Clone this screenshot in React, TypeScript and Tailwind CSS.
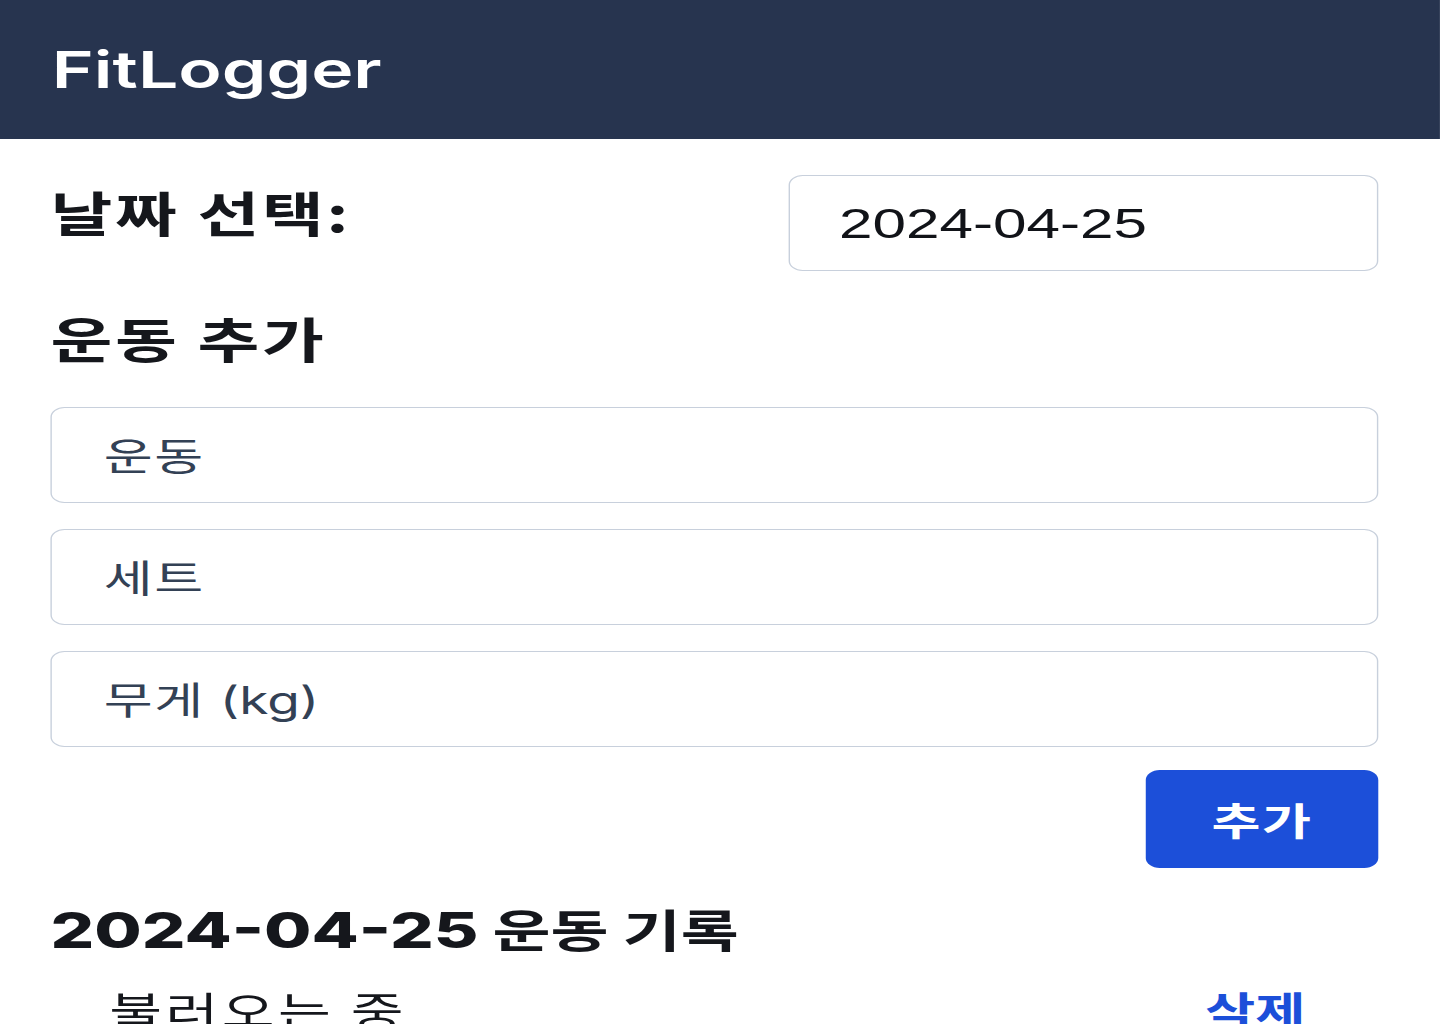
import React from "react";

const KR = "font-['Noto_Sans_CJK_KR','Noto_Sans',sans-serif]";

function Field({ placeholder }: { placeholder: React.ReactNode }) {
  return (
    <div className="flex h-[96px] items-center rounded-[10px] border border-[#c8d0dc] bg-white pl-[37px]">
      <span className="text-[38px] leading-none text-[#334155]">{placeholder}</span>
    </div>
  );
}

export default function App() {
  return (
    <div className="h-[1024px] w-full overflow-hidden bg-white">
      <div className="w-[1028px] origin-top-left scale-x-[1.4007] font-[Inter,'Noto_Sans_CJK_KR',sans-serif]">
        <header className="flex h-[139px] items-center bg-[#27344f] pl-[37px]">
          <h1 className="text-[51px] font-semibold leading-none text-white">FitLogger</h1>
        </header>

        <main className="flex flex-col pl-[36px] pr-[44px] pt-[36px]">
          <div className="flex items-start justify-between">
            <h2 className={`${KR} mt-[12px] text-[48px] font-bold leading-none tracking-[0.04em] text-[#15171c]`}>
              날짜 선택:
            </h2>
            <div className="flex h-[96px] w-[421px] items-center rounded-[10px] border border-[#c8d0dc] pl-[35px]">
              <span className="font-['Liberation_Sans',Arial,sans-serif] text-[43px] leading-none text-[#111318]">
                2024-04-25
              </span>
            </div>
          </div>

          <h2 className={`${KR} mt-[42px] text-[48px] font-bold leading-none tracking-[0.04em] text-[#15171c]`}>
            운동 추가
          </h2>

          <div className="mt-[46px] flex flex-col gap-[26px]">
            <Field placeholder={<span className={`${KR} tracking-[0.03em]`}>운동</span>} />
            <Field placeholder={<span className={`${KR} tracking-[0.03em]`}>세트</span>} />
            <Field
              placeholder={
                <>
                  <span className={`${KR} tracking-[0.03em]`}>무게</span>{" "}
                  <span className="font-[Inter,sans-serif]">(kg)</span>
                </>
              }
            />
          </div>

          <div className="mt-[23px] flex justify-end">
            <button className="flex h-[98px] w-[166px] items-center justify-center rounded-[10px] bg-[#1c4fd9]">
              <span className={`${KR} text-[38px] font-bold leading-none tracking-[0.03em] text-white`}>추가</span>
            </button>
          </div>

          <h2 className="mt-[38px] flex items-baseline leading-none text-[#15171c]">
            <span className="text-[49px] font-extrabold">2024-04-25</span>
            <span className={`${KR} ml-[10px] text-[45px] font-bold`}>운동 기록</span>
          </h2>

          <ul className="mt-[34px] flex flex-col">
            <li className="flex items-start justify-between pl-[42px] pr-[52px]">
              <span className={`${KR} text-[41px] leading-none tracking-[0.06em] text-[#15171c]`}>불러오는 중</span>
              <button className={`${KR} text-[39px] font-bold leading-none text-[#1c4fd9]`}>삭제</button>
            </li>
          </ul>
        </main>
      </div>
    </div>
  );
}
